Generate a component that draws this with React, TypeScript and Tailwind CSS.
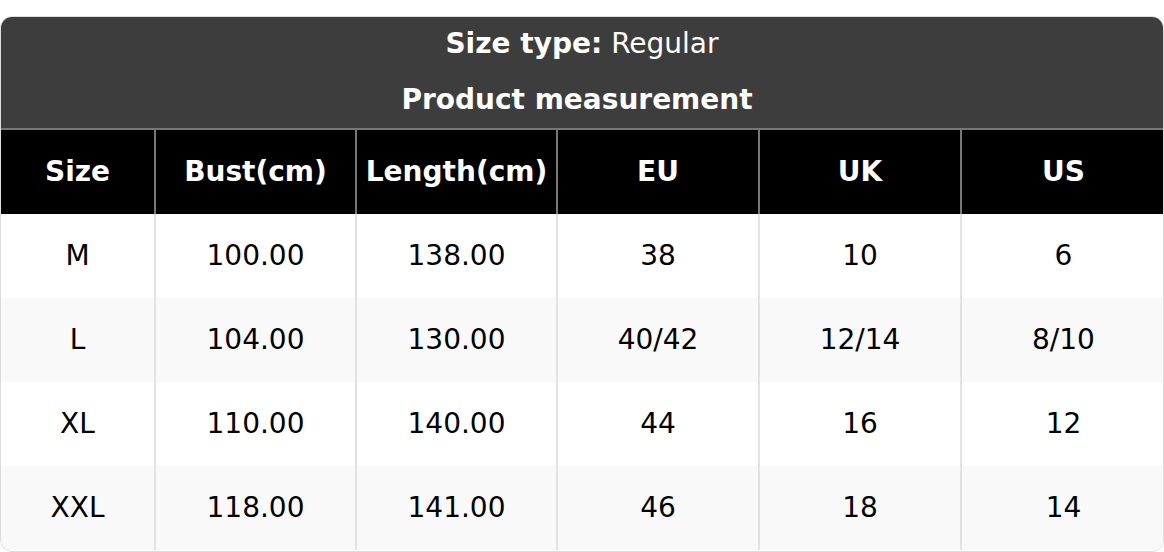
import React from 'react'

const headers = ['Size', 'Bust(cm)', 'Length(cm)', 'EU', 'UK', 'US']

const rows = [
  ['M', '100.00', '138.00', '38', '10', '6'],
  ['L', '104.00', '130.00', '40/42', '12/14', '8/10'],
  ['XL', '110.00', '140.00', '44', '16', '12'],
  ['XXL', '118.00', '141.00', '46', '18', '14'],
]

const widths = ['w-[154px]', 'w-[201px]', 'w-[201px]', 'w-[202px]', 'w-[202px]', 'w-[204px]']

export default function App() {
  return (
    <div className="bg-white pt-4 font-['DejaVu_Sans',sans-serif]">
      <div className="rounded-xl overflow-hidden border border-[#dddddd] h-[536px]">
        {/* Title block */}
        <div className="bg-[#3d3d3d] text-white text-[28px] text-center h-[111px] flex flex-col">
          <div className="h-[56px] flex items-center justify-center pb-[3px]">
            <span className="font-bold">Size type:</span>
            <span className="ml-[9px]">Regular</span>
          </div>
          <div className="h-[55px] flex items-center justify-center font-bold pb-[1px] pr-[10px]">Product measurement</div>
        </div>

        <table className="w-full border-collapse table-fixed text-[28px]">
          <thead>
            <tr className="bg-black text-white h-[85px]">
              {headers.map((h, i) => (
                <th
                  key={h}
                  className={`${widths[i]} font-bold border-t-2 border-[#777777] ${i > 0 ? 'border-l-2' : ''} px-0`}
                >
                  {h}
                </th>
              ))}
            </tr>
          </thead>
          <tbody>
            {rows.map((r, ri) => (
              <tr key={ri} className={`h-[84px] ${ri % 2 === 1 ? 'bg-[#f9f9f9]' : 'bg-white'}`}>
                {r.map((c, ci) => (
                  <td
                    key={ci}
                    className={`text-center text-black ${ci > 0 ? 'border-l-2 border-[#e2e2e2]' : ''}`}
                  >
                    {c}
                  </td>
                ))}
              </tr>
            ))}
          </tbody>
        </table>
      </div>
    </div>
  )
}
